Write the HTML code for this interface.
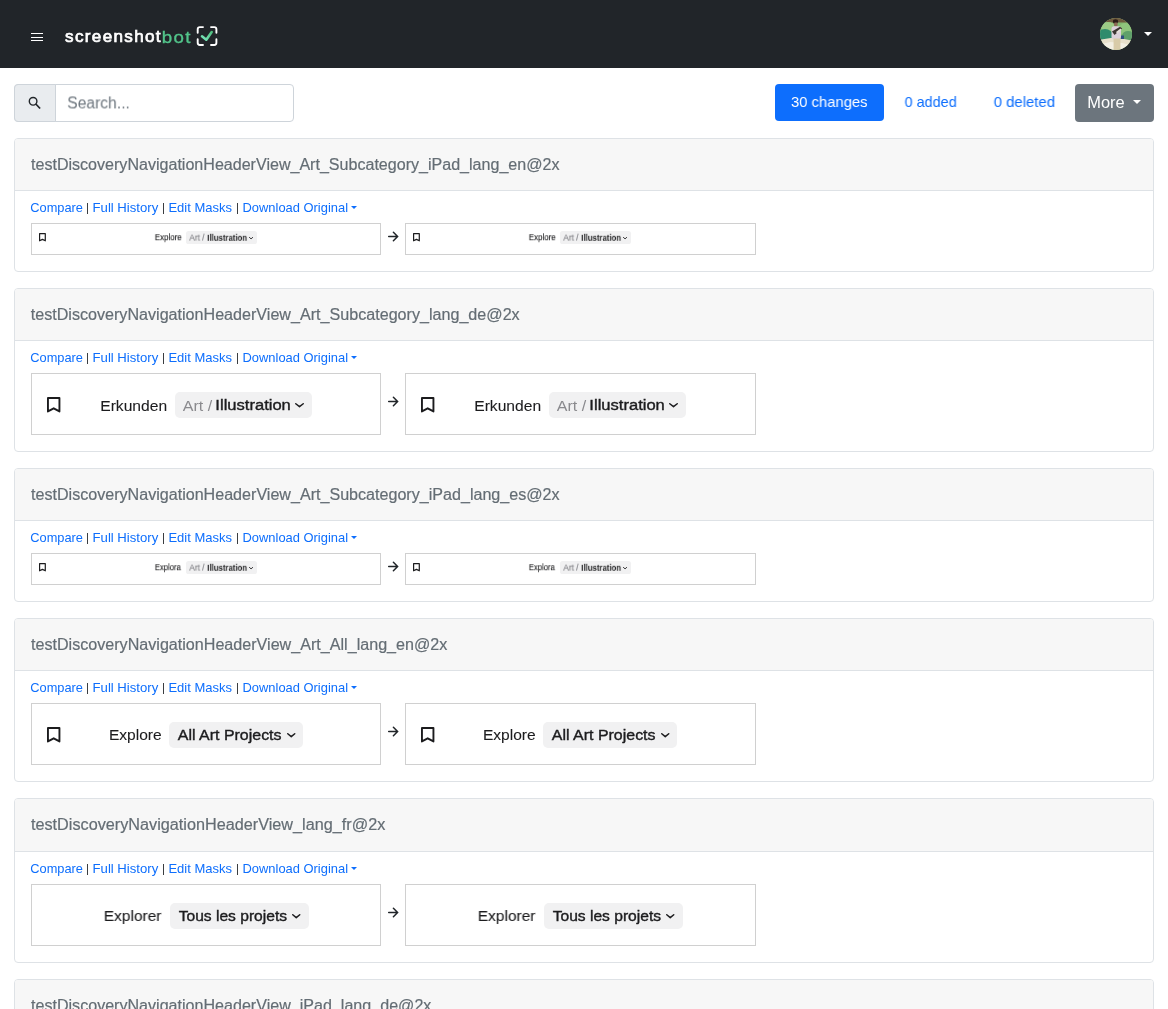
<!DOCTYPE html>
<html><head><meta charset="utf-8"><title>screenshotbot</title>
<style>
html,body{margin:0;padding:0;background:#fff;}
body{width:1168px;height:1009px;overflow:hidden;position:relative;font-family:"Liberation Sans", sans-serif;}
div,span,svg{box-sizing:border-box;}
.a{position:absolute;}
.t{position:absolute;white-space:nowrap;}
.fit{display:inline-block;transform-origin:0 0;will-change:transform;}
.nav{position:absolute;left:0;top:0;width:1168px;height:68px;background:#212529;}
.card{position:absolute;left:14px;width:1140px;border:1px solid #dee2e6;border-radius:4px;overflow:hidden;background:#fff;}
.ch{position:absolute;left:0;top:0;right:0;background:#f7f7f7;border-bottom:1px solid #dee2e6;}
.caret{position:absolute;width:0;height:0;border-style:solid;border-color:#0d6efd transparent transparent transparent;}
.box{position:absolute;border:1px solid #d0d0d0;background:#fff;}
.pill{position:absolute;background:#f1f1f2;}
</style></head><body>
<div class="nav"></div>
<div class="a" style="left:31px;top:33.0px;width:12px;height:1.35px;background:#fff"></div>
<div class="a" style="left:31px;top:36.5px;width:12px;height:1.35px;background:#fff"></div>
<div class="a" style="left:31px;top:39.7px;width:12px;height:1.35px;background:#fff"></div>
<div class="t" style="left:65.40px;top:25.98px;font-size:17px;line-height:21px;color:#fff;font-weight:normal;-webkit-text-stroke:0.7px #fff;letter-spacing:1.3px;"><span class="fit" style="transform:translate(0.10px,0.40px) scaleX(1.0063)">screenshot</span></div>
<div class="t" style="left:162.60px;top:26.08px;font-size:17px;line-height:21px;color:#52c48a;font-weight:normal;-webkit-text-stroke:0.35px #52c48a;letter-spacing:1.2px;"><span class="fit" style="transform:translate(-1.19px,0.60px) scaleX(1.1000)">bot</span></div>
<svg class="a" style="left:192px;top:22px" width="30" height="28" viewBox="192 22 30 28">
<path d="M203 27.1 H199.9 Q197.7 27.1 197.7 29.3 V32.8" fill="none" stroke="#fff" stroke-width="1.9" stroke-linecap="round"/>
<path d="M211 27.1 H214.2 Q216.4 27.1 216.4 29.3 V32.8" fill="none" stroke="#fff" stroke-width="1.9" stroke-linecap="round"/>
<path d="M197.7 39.3 V42.8 Q197.7 45 199.9 45 H203" fill="none" stroke="#fff" stroke-width="1.9" stroke-linecap="round"/>
<path d="M216.4 39.3 V42.8 Q216.4 45 214.2 45 H211" fill="none" stroke="#fff" stroke-width="1.9" stroke-linecap="round"/>
<defs><linearGradient id="g" x1="0" y1="1" x2="1" y2="0"><stop offset="0" stop-color="#7be8bd"/><stop offset="1" stop-color="#4fbf7f"/></linearGradient></defs>
<path d="M202 36.3 L206.3 39.7 L211.7 32" fill="none" stroke="url(#g)" stroke-width="2.6" stroke-linecap="round" stroke-linejoin="round"/>
</svg>
<div class="a" style="left:1100px;top:18px;width:32px;height:32px;border-radius:50%;overflow:hidden;background:#9cc98e;">
<svg class="a" style="left:0;top:0" width="32" height="32" viewBox="0 0 32 32">
<defs><filter id="bl" x="-10%" y="-10%" width="120%" height="120%"><feGaussianBlur stdDeviation="0.55"/></filter></defs>
<g filter="url(#bl)">
<rect x="-2" y="-2" width="36" height="36" fill="#86bb73"/>
<rect x="-2" y="-2" width="36" height="7" fill="#6e5a3e"/>
<rect x="-2" y="4.5" width="36" height="18" fill="#82b96f"/>
<ellipse cx="8" cy="9" rx="7" ry="5" fill="#9ccb86"/>
<ellipse cx="25" cy="11" rx="6" ry="6" fill="#8fc47b"/>
<ellipse cx="5" cy="18" rx="8" ry="7" fill="#2f8b6c"/>
<ellipse cx="28" cy="18" rx="6" ry="5" fill="#5ea06a"/>
<polygon points="-2,22 14,19.5 22,20.5 34,23 34,34 -2,34" fill="#e7e0cb"/>
<polygon points="-2,27 10,24 22,25 34,28 34,34 -2,34" fill="#f3efe3"/>
<rect x="20.5" y="17.5" width="3.5" height="3.5" fill="#2f4f82"/>
<ellipse cx="15.5" cy="3.6" rx="2.6" ry="2.3" fill="#2a1d17"/>
<rect x="14" y="4.5" width="3.6" height="3.8" rx="1.2" fill="#8b6a55"/>
<rect x="11.5" y="8.3" width="9.5" height="13" rx="2.5" fill="#dcd0da"/>
<polygon points="12,13.5 20,8.8 22.2,10.5 14.5,17" fill="#3c3430"/>
<polygon points="16,14 20.5,10.5 21.5,12 17,15.5" fill="#e8e0dc"/>
<rect x="13.6" y="20.5" width="6.8" height="12" fill="#d8cba8"/>
</g></svg>
</div>
<div class="caret" style="left:1144px;top:31.7px;border-width:4.3px 4px 0 4px;border-top-color:#fff"></div>
<div class="a" style="left:14px;top:84px;width:280px;height:38px;border:1px solid #ced4da;border-radius:4px;background:#fff"></div>
<div class="a" style="left:14px;top:84px;width:42px;height:38px;border:1px solid #ced4da;border-radius:4px 0 0 4px;background:#e9ecef"></div>
<svg class="a" style="left:20px;top:90px" width="30" height="26" viewBox="20 90 30 26">
<circle cx="33.1" cy="101.3" r="3.8" fill="none" stroke="#212529" stroke-width="1.4"/>
<path d="M35.8 104.0 L40.1 108.5" stroke="#212529" stroke-width="1.75"/>
</svg>
<div class="t" style="left:68.20px;top:92.11px;font-size:16px;line-height:20px;color:#6c757d;font-weight:normal;"><span class="fit" style="transform:translate(-0.78px,1.40px) scaleX(0.9774)">Search...</span></div>
<div class="a" style="left:775px;top:84px;width:109px;height:37.2px;background:#0d6efd;border-radius:4px"></div>
<div class="t" style="left:792.00px;top:92.04px;font-size:15px;line-height:19px;color:#fff;font-weight:normal;"><span class="fit" style="transform:translate(-0.99px,0.00px) scaleX(0.9868)">30 changes</span></div>
<div class="t" style="left:904.60px;top:92.04px;font-size:15px;line-height:19px;color:#0d6efd;font-weight:normal;"><span class="fit" style="transform:translate(-0.38px,0.00px) scaleX(0.9593)">0 added</span></div>
<div class="t" style="left:993.70px;top:92.04px;font-size:15px;line-height:19px;color:#0d6efd;font-weight:normal;"><span class="fit" style="transform:translate(-0.30px,0.00px) scaleX(0.9934)">0 deleted</span></div>
<div class="a" style="left:1075px;top:84px;width:79px;height:38px;background:#6c757d;border-radius:4px"></div>
<div class="t" style="left:1088.70px;top:92.41px;font-size:16px;line-height:20px;color:#fff;font-weight:normal;"><span class="fit" style="transform:translate(-1.68px,1.00px) scaleX(1.0257)">More</span></div>
<div class="caret" style="left:1133px;top:99.8px;border-width:4.9px 4px 0 4px;border-top-color:#fff"></div>
<div class="card" style="top:138px;height:134px"><div class="ch" style="height:52px"></div></div>
<div class="t" style="left:31.00px;top:153.91px;font-size:16px;line-height:20px;color:#646d74;font-weight:normal;-webkit-text-stroke:0.2px #646d74;"><span class="fit" style="transform:translate(0.00px,1.00px) scaleX(1.0038)">testDiscoveryNavigationHeaderView_Art_Subcategory_iPad_lang_en@2x</span></div>
<div class="t" style="left:31.40px;top:199.73px;font-size:12.8px;line-height:16px;color:#0d6efd;font-weight:normal;"><span class="fit" style="transform:translate(-0.70px,0.00px) scaleX(1.0000)">Compare</span></div>
<div class="t" style="left:93.40px;top:199.13px;font-size:12.8px;line-height:16px;color:#0d6efd;font-weight:normal;"><span class="fit" style="transform:translate(-0.42px,0.80px) scaleX(1.0254)">Full History</span></div>
<div class="t" style="left:169.70px;top:199.13px;font-size:12.8px;line-height:16px;color:#0d6efd;font-weight:normal;"><span class="fit" style="transform:translate(-1.62px,0.80px) scaleX(1.0164)">Edit Masks</span></div>
<div class="t" style="left:243.30px;top:199.13px;font-size:12.8px;line-height:16px;color:#0d6efd;font-weight:normal;"><span class="fit" style="transform:translate(-0.46px,0.80px) scaleX(1.0087)">Download Original</span></div>
<div class="a" style="left:87.1px;top:203px;width:1.3px;height:11px;background:#3a3d40"></div>
<div class="a" style="left:162.9px;top:203px;width:1.3px;height:11px;background:#3a3d40"></div>
<div class="a" style="left:237.1px;top:203px;width:1.3px;height:11px;background:#3a3d40"></div>
<div class="caret" style="left:351px;top:206px;border-width:3.2px 3px 0 3px"></div>
<div class="box" style="left:31px;top:223px;width:350px;height:32px"></div>
<div class="box" style="left:405px;top:223px;width:351px;height:32px"></div>
<svg class="a" style="left:387px;top:230.5px" width="12" height="11" viewBox="0 0 12 11"><path d="M1.7 5.5 H10.6 M6.4 1.3 L10.6 5.5 L6.4 9.7" fill="none" stroke="#212529" stroke-width="1.5" stroke-linecap="round" stroke-linejoin="miter"/></svg>
<svg class="a" style="left:39.1px;top:233.3px;overflow:visible" width="6.9" height="8.4" viewBox="0 0 6.9 8.4"><path d="M0.6 0.6 H6.300000000000001 V7.800000000000001 L3.45 6.4 L0.6 7.800000000000001 Z" fill="none" stroke="#1c1c1e" stroke-width="1.2" stroke-linejoin="round" stroke-linecap="round"/></svg>
<div class="pill" style="left:185.6px;top:231.2px;width:71.4px;height:12.800000000000011px;border-radius:2.6px"></div>
<div class="t" style="left:154.80px;top:231.43px;font-size:9px;line-height:11px;color:#1c1c1e;font-weight:normal;-webkit-text-stroke:0.15px #1c1c1e;"><span class="fit" style="transform:translate(-0.18px,1.20px) scaleX(0.8800)">Explore</span></div>
<div class="t" style="left:189.00px;top:232.13px;font-size:9px;line-height:11px;color:#7c7c80;font-weight:normal;-webkit-text-stroke:0.1px #7c7c80;"><span class="fit" style="transform:translate(0.30px,0.60px) scaleX(0.9176)">Art /</span></div>
<div class="t" style="left:207.20px;top:231.73px;font-size:9px;line-height:11px;color:#1c1c1e;font-weight:bold;"><span class="fit" style="transform:translate(0.27px,0.80px) scaleX(0.8652)">Illustration</span></div>
<svg class="a" style="left:249.3px;top:237.1px;overflow:visible" width="4.099999999999994" height="2.3000000000000114" viewBox="0 0 4.099999999999994 2.3000000000000114"><path d="M0.45 0.45 L2.049999999999997 1.8500000000000114 L3.649999999999994 0.45" fill="none" stroke="#1c1c1e" stroke-width="0.9" stroke-linecap="round" stroke-linejoin="round"/></svg>
<svg class="a" style="left:413.1px;top:233.3px;overflow:visible" width="6.9" height="8.4" viewBox="0 0 6.9 8.4"><path d="M0.6 0.6 H6.300000000000001 V7.800000000000001 L3.45 6.4 L0.6 7.800000000000001 Z" fill="none" stroke="#1c1c1e" stroke-width="1.2" stroke-linejoin="round" stroke-linecap="round"/></svg>
<div class="pill" style="left:559.6px;top:231.2px;width:71.39999999999998px;height:12.800000000000011px;border-radius:2.6px"></div>
<div class="t" style="left:528.80px;top:231.43px;font-size:9px;line-height:11px;color:#1c1c1e;font-weight:normal;-webkit-text-stroke:0.15px #1c1c1e;"><span class="fit" style="transform:translate(-0.18px,1.20px) scaleX(0.8800)">Explore</span></div>
<div class="t" style="left:563.00px;top:232.13px;font-size:9px;line-height:11px;color:#7c7c80;font-weight:normal;-webkit-text-stroke:0.1px #7c7c80;"><span class="fit" style="transform:translate(0.30px,0.60px) scaleX(0.9176)">Art /</span></div>
<div class="t" style="left:581.20px;top:231.73px;font-size:9px;line-height:11px;color:#1c1c1e;font-weight:bold;"><span class="fit" style="transform:translate(0.27px,0.80px) scaleX(0.8652)">Illustration</span></div>
<svg class="a" style="left:623.3px;top:237.1px;overflow:visible" width="4.100000000000023" height="2.3000000000000114" viewBox="0 0 4.100000000000023 2.3000000000000114"><path d="M0.45 0.45 L2.0500000000000114 1.8500000000000114 L3.6500000000000226 0.45" fill="none" stroke="#1c1c1e" stroke-width="0.9" stroke-linecap="round" stroke-linejoin="round"/></svg>
<div class="card" style="top:288px;height:164px"><div class="ch" style="height:52px"></div></div>
<div class="t" style="left:31.00px;top:303.91px;font-size:16px;line-height:20px;color:#646d74;font-weight:normal;-webkit-text-stroke:0.2px #646d74;"><span class="fit" style="transform:translate(-0.30px,1.00px) scaleX(1.0070)">testDiscoveryNavigationHeaderView_Art_Subcategory_lang_de@2x</span></div>
<div class="t" style="left:31.40px;top:349.73px;font-size:12.8px;line-height:16px;color:#0d6efd;font-weight:normal;"><span class="fit" style="transform:translate(-0.70px,0.00px) scaleX(1.0000)">Compare</span></div>
<div class="t" style="left:93.40px;top:349.13px;font-size:12.8px;line-height:16px;color:#0d6efd;font-weight:normal;"><span class="fit" style="transform:translate(-0.42px,0.80px) scaleX(1.0254)">Full History</span></div>
<div class="t" style="left:169.70px;top:349.13px;font-size:12.8px;line-height:16px;color:#0d6efd;font-weight:normal;"><span class="fit" style="transform:translate(-1.62px,0.80px) scaleX(1.0164)">Edit Masks</span></div>
<div class="t" style="left:243.30px;top:349.13px;font-size:12.8px;line-height:16px;color:#0d6efd;font-weight:normal;"><span class="fit" style="transform:translate(-0.46px,0.80px) scaleX(1.0087)">Download Original</span></div>
<div class="a" style="left:87.1px;top:353px;width:1.3px;height:11px;background:#3a3d40"></div>
<div class="a" style="left:162.9px;top:353px;width:1.3px;height:11px;background:#3a3d40"></div>
<div class="a" style="left:237.1px;top:353px;width:1.3px;height:11px;background:#3a3d40"></div>
<div class="caret" style="left:351px;top:356px;border-width:3.2px 3px 0 3px"></div>
<div class="box" style="left:31px;top:373px;width:350px;height:62px"></div>
<div class="box" style="left:405px;top:373px;width:351px;height:62px"></div>
<svg class="a" style="left:387px;top:395.5px" width="12" height="11" viewBox="0 0 12 11"><path d="M1.7 5.5 H10.6 M6.4 1.3 L10.6 5.5 L6.4 9.7" fill="none" stroke="#212529" stroke-width="1.5" stroke-linecap="round" stroke-linejoin="miter"/></svg>
<svg class="a" style="left:46.5px;top:397px;overflow:visible" width="13.4" height="15.4" viewBox="0 0 13.4 15.4"><path d="M0.95 0.95 H12.450000000000001 V14.450000000000001 L6.7 11.3 L0.95 14.450000000000001 Z" fill="none" stroke="#1c1c1e" stroke-width="1.9" stroke-linejoin="round" stroke-linecap="round"/></svg>
<div class="pill" style="left:175.1px;top:391.8px;width:136.6px;height:26.30000000000001px;border-radius:5px"></div>
<div class="t" style="left:101.00px;top:395.58px;font-size:15.5px;line-height:19px;color:#1c1c1e;font-weight:normal;-webkit-text-stroke:0.1px #1c1c1e;"><span class="fit" style="transform:translate(-0.76px,-0.30px) scaleX(1.0077)">Erkunden</span></div>
<div class="t" style="left:182.90px;top:395.58px;font-size:15.5px;line-height:19px;color:#8a8a8e;font-weight:normal;"><span class="fit" style="transform:translate(-0.20px,-0.30px) scaleX(1.0357)">Art /</span></div>
<div class="t" style="left:216.80px;top:395.18px;font-size:15.5px;line-height:19px;color:#1c1c1e;font-weight:normal;-webkit-text-stroke:0.4px #1c1c1e;"><span class="fit" style="transform:translate(-1.63px,-0.10px) scaleX(1.0681)">Illustration</span></div>
<svg class="a" style="left:295.2px;top:402.8px;overflow:visible" width="9.0" height="4.399999999999977" viewBox="0 0 9.0 4.399999999999977"><path d="M0.75 0.75 L4.5 3.6499999999999773 L8.25 0.75" fill="none" stroke="#1c1c1e" stroke-width="1.5" stroke-linecap="round" stroke-linejoin="round"/></svg>
<svg class="a" style="left:420.5px;top:397px;overflow:visible" width="13.4" height="15.4" viewBox="0 0 13.4 15.4"><path d="M0.95 0.95 H12.450000000000001 V14.450000000000001 L6.7 11.3 L0.95 14.450000000000001 Z" fill="none" stroke="#1c1c1e" stroke-width="1.9" stroke-linejoin="round" stroke-linecap="round"/></svg>
<div class="pill" style="left:549.1px;top:391.8px;width:136.60000000000002px;height:26.30000000000001px;border-radius:5px"></div>
<div class="t" style="left:475.00px;top:395.58px;font-size:15.5px;line-height:19px;color:#1c1c1e;font-weight:normal;-webkit-text-stroke:0.1px #1c1c1e;"><span class="fit" style="transform:translate(-0.76px,-0.30px) scaleX(1.0077)">Erkunden</span></div>
<div class="t" style="left:556.90px;top:395.58px;font-size:15.5px;line-height:19px;color:#8a8a8e;font-weight:normal;"><span class="fit" style="transform:translate(-0.20px,-0.30px) scaleX(1.0357)">Art /</span></div>
<div class="t" style="left:590.80px;top:395.18px;font-size:15.5px;line-height:19px;color:#1c1c1e;font-weight:normal;-webkit-text-stroke:0.4px #1c1c1e;"><span class="fit" style="transform:translate(-1.63px,-0.10px) scaleX(1.0681)">Illustration</span></div>
<svg class="a" style="left:669.2px;top:402.8px;overflow:visible" width="9.0" height="4.399999999999977" viewBox="0 0 9.0 4.399999999999977"><path d="M0.75 0.75 L4.5 3.6499999999999773 L8.25 0.75" fill="none" stroke="#1c1c1e" stroke-width="1.5" stroke-linecap="round" stroke-linejoin="round"/></svg>
<div class="card" style="top:468px;height:134px"><div class="ch" style="height:52px"></div></div>
<div class="t" style="left:31.00px;top:483.91px;font-size:16px;line-height:20px;color:#646d74;font-weight:normal;-webkit-text-stroke:0.2px #646d74;"><span class="fit" style="transform:translate(0.00px,1.00px) scaleX(1.0057)">testDiscoveryNavigationHeaderView_Art_Subcategory_iPad_lang_es@2x</span></div>
<div class="t" style="left:31.40px;top:529.73px;font-size:12.8px;line-height:16px;color:#0d6efd;font-weight:normal;"><span class="fit" style="transform:translate(-0.70px,0.00px) scaleX(1.0000)">Compare</span></div>
<div class="t" style="left:93.40px;top:529.13px;font-size:12.8px;line-height:16px;color:#0d6efd;font-weight:normal;"><span class="fit" style="transform:translate(-0.42px,0.80px) scaleX(1.0254)">Full History</span></div>
<div class="t" style="left:169.70px;top:529.13px;font-size:12.8px;line-height:16px;color:#0d6efd;font-weight:normal;"><span class="fit" style="transform:translate(-1.62px,0.80px) scaleX(1.0164)">Edit Masks</span></div>
<div class="t" style="left:243.30px;top:529.13px;font-size:12.8px;line-height:16px;color:#0d6efd;font-weight:normal;"><span class="fit" style="transform:translate(-0.46px,0.80px) scaleX(1.0087)">Download Original</span></div>
<div class="a" style="left:87.1px;top:533px;width:1.3px;height:11px;background:#3a3d40"></div>
<div class="a" style="left:162.9px;top:533px;width:1.3px;height:11px;background:#3a3d40"></div>
<div class="a" style="left:237.1px;top:533px;width:1.3px;height:11px;background:#3a3d40"></div>
<div class="caret" style="left:351px;top:536px;border-width:3.2px 3px 0 3px"></div>
<div class="box" style="left:31px;top:553px;width:350px;height:32px"></div>
<div class="box" style="left:405px;top:553px;width:351px;height:32px"></div>
<svg class="a" style="left:387px;top:560.5px" width="12" height="11" viewBox="0 0 12 11"><path d="M1.7 5.5 H10.6 M6.4 1.3 L10.6 5.5 L6.4 9.7" fill="none" stroke="#212529" stroke-width="1.5" stroke-linecap="round" stroke-linejoin="miter"/></svg>
<svg class="a" style="left:39.1px;top:563.3px;overflow:visible" width="6.9" height="8.4" viewBox="0 0 6.9 8.4"><path d="M0.6 0.6 H6.300000000000001 V7.800000000000001 L3.45 6.4 L0.6 7.800000000000001 Z" fill="none" stroke="#1c1c1e" stroke-width="1.2" stroke-linejoin="round" stroke-linecap="round"/></svg>
<div class="pill" style="left:185.6px;top:561.2px;width:71.4px;height:12.799999999999955px;border-radius:2.6px"></div>
<div class="t" style="left:154.80px;top:561.43px;font-size:9px;line-height:11px;color:#1c1c1e;font-weight:normal;-webkit-text-stroke:0.15px #1c1c1e;"><span class="fit" style="transform:translate(-0.17px,1.20px) scaleX(0.8516)">Explora</span></div>
<div class="t" style="left:189.00px;top:562.13px;font-size:9px;line-height:11px;color:#7c7c80;font-weight:normal;-webkit-text-stroke:0.1px #7c7c80;"><span class="fit" style="transform:translate(0.30px,0.60px) scaleX(0.9176)">Art /</span></div>
<div class="t" style="left:207.20px;top:561.73px;font-size:9px;line-height:11px;color:#1c1c1e;font-weight:bold;"><span class="fit" style="transform:translate(0.27px,0.80px) scaleX(0.8652)">Illustration</span></div>
<svg class="a" style="left:249.3px;top:567.1px;overflow:visible" width="4.099999999999994" height="2.2999999999999545" viewBox="0 0 4.099999999999994 2.2999999999999545"><path d="M0.45 0.45 L2.049999999999997 1.8499999999999546 L3.649999999999994 0.45" fill="none" stroke="#1c1c1e" stroke-width="0.9" stroke-linecap="round" stroke-linejoin="round"/></svg>
<svg class="a" style="left:413.1px;top:563.3px;overflow:visible" width="6.9" height="8.4" viewBox="0 0 6.9 8.4"><path d="M0.6 0.6 H6.300000000000001 V7.800000000000001 L3.45 6.4 L0.6 7.800000000000001 Z" fill="none" stroke="#1c1c1e" stroke-width="1.2" stroke-linejoin="round" stroke-linecap="round"/></svg>
<div class="pill" style="left:559.6px;top:561.2px;width:71.39999999999998px;height:12.799999999999955px;border-radius:2.6px"></div>
<div class="t" style="left:528.80px;top:561.43px;font-size:9px;line-height:11px;color:#1c1c1e;font-weight:normal;-webkit-text-stroke:0.15px #1c1c1e;"><span class="fit" style="transform:translate(-0.17px,1.20px) scaleX(0.8516)">Explora</span></div>
<div class="t" style="left:563.00px;top:562.13px;font-size:9px;line-height:11px;color:#7c7c80;font-weight:normal;-webkit-text-stroke:0.1px #7c7c80;"><span class="fit" style="transform:translate(0.30px,0.60px) scaleX(0.9176)">Art /</span></div>
<div class="t" style="left:581.20px;top:561.73px;font-size:9px;line-height:11px;color:#1c1c1e;font-weight:bold;"><span class="fit" style="transform:translate(0.27px,0.80px) scaleX(0.8652)">Illustration</span></div>
<svg class="a" style="left:623.3px;top:567.1px;overflow:visible" width="4.100000000000023" height="2.2999999999999545" viewBox="0 0 4.100000000000023 2.2999999999999545"><path d="M0.45 0.45 L2.0500000000000114 1.8499999999999546 L3.6500000000000226 0.45" fill="none" stroke="#1c1c1e" stroke-width="0.9" stroke-linecap="round" stroke-linejoin="round"/></svg>
<div class="card" style="top:618px;height:164px"><div class="ch" style="height:52px"></div></div>
<div class="t" style="left:31.00px;top:633.91px;font-size:16px;line-height:20px;color:#646d74;font-weight:normal;-webkit-text-stroke:0.2px #646d74;"><span class="fit" style="transform:translate(-0.05px,1.00px) scaleX(1.0070)">testDiscoveryNavigationHeaderView_Art_All_lang_en@2x</span></div>
<div class="t" style="left:31.40px;top:679.73px;font-size:12.8px;line-height:16px;color:#0d6efd;font-weight:normal;"><span class="fit" style="transform:translate(-0.70px,0.00px) scaleX(1.0000)">Compare</span></div>
<div class="t" style="left:93.40px;top:679.13px;font-size:12.8px;line-height:16px;color:#0d6efd;font-weight:normal;"><span class="fit" style="transform:translate(-0.42px,0.80px) scaleX(1.0254)">Full History</span></div>
<div class="t" style="left:169.70px;top:679.13px;font-size:12.8px;line-height:16px;color:#0d6efd;font-weight:normal;"><span class="fit" style="transform:translate(-1.62px,0.80px) scaleX(1.0164)">Edit Masks</span></div>
<div class="t" style="left:243.30px;top:679.13px;font-size:12.8px;line-height:16px;color:#0d6efd;font-weight:normal;"><span class="fit" style="transform:translate(-0.46px,0.80px) scaleX(1.0087)">Download Original</span></div>
<div class="a" style="left:87.1px;top:683px;width:1.3px;height:11px;background:#3a3d40"></div>
<div class="a" style="left:162.9px;top:683px;width:1.3px;height:11px;background:#3a3d40"></div>
<div class="a" style="left:237.1px;top:683px;width:1.3px;height:11px;background:#3a3d40"></div>
<div class="caret" style="left:351px;top:686px;border-width:3.2px 3px 0 3px"></div>
<div class="box" style="left:31px;top:703px;width:350px;height:62px"></div>
<div class="box" style="left:405px;top:703px;width:351px;height:62px"></div>
<svg class="a" style="left:387px;top:725.5px" width="12" height="11" viewBox="0 0 12 11"><path d="M1.7 5.5 H10.6 M6.4 1.3 L10.6 5.5 L6.4 9.7" fill="none" stroke="#212529" stroke-width="1.5" stroke-linecap="round" stroke-linejoin="miter"/></svg>
<svg class="a" style="left:46.5px;top:727px;overflow:visible" width="13.4" height="15.4" viewBox="0 0 13.4 15.4"><path d="M0.95 0.95 H12.450000000000001 V14.450000000000001 L6.7 11.3 L0.95 14.450000000000001 Z" fill="none" stroke="#1c1c1e" stroke-width="1.9" stroke-linejoin="round" stroke-linecap="round"/></svg>
<div class="pill" style="left:169.3px;top:721.8px;width:133.89999999999998px;height:26.300000000000068px;border-radius:5px"></div>
<div class="t" style="left:109.90px;top:725.23px;font-size:15.5px;line-height:19px;color:#1c1c1e;font-weight:normal;-webkit-text-stroke:0.1px #1c1c1e;"><span class="fit" style="transform:translate(-1.10px,0.00px) scaleX(1.0039)">Explore</span></div>
<div class="t" style="left:177.70px;top:725.18px;font-size:15.5px;line-height:19px;color:#1c1c1e;font-weight:normal;-webkit-text-stroke:0.4px #1c1c1e;"><span class="fit" style="transform:translate(-0.16px,-0.10px) scaleX(1.0287)">All Art Projects</span></div>
<svg class="a" style="left:287px;top:732.8px;overflow:visible" width="8.5" height="4.400000000000091" viewBox="0 0 8.5 4.400000000000091"><path d="M0.75 0.75 L4.25 3.650000000000091 L7.75 0.75" fill="none" stroke="#1c1c1e" stroke-width="1.5" stroke-linecap="round" stroke-linejoin="round"/></svg>
<svg class="a" style="left:420.5px;top:727px;overflow:visible" width="13.4" height="15.4" viewBox="0 0 13.4 15.4"><path d="M0.95 0.95 H12.450000000000001 V14.450000000000001 L6.7 11.3 L0.95 14.450000000000001 Z" fill="none" stroke="#1c1c1e" stroke-width="1.9" stroke-linejoin="round" stroke-linecap="round"/></svg>
<div class="pill" style="left:543.3px;top:721.8px;width:133.9000000000001px;height:26.300000000000068px;border-radius:5px"></div>
<div class="t" style="left:483.90px;top:725.23px;font-size:15.5px;line-height:19px;color:#1c1c1e;font-weight:normal;-webkit-text-stroke:0.1px #1c1c1e;"><span class="fit" style="transform:translate(-1.10px,0.00px) scaleX(1.0039)">Explore</span></div>
<div class="t" style="left:551.70px;top:725.18px;font-size:15.5px;line-height:19px;color:#1c1c1e;font-weight:normal;-webkit-text-stroke:0.4px #1c1c1e;"><span class="fit" style="transform:translate(-0.16px,-0.10px) scaleX(1.0287)">All Art Projects</span></div>
<svg class="a" style="left:661px;top:732.8px;overflow:visible" width="8.5" height="4.400000000000091" viewBox="0 0 8.5 4.400000000000091"><path d="M0.75 0.75 L4.25 3.650000000000091 L7.75 0.75" fill="none" stroke="#1c1c1e" stroke-width="1.5" stroke-linecap="round" stroke-linejoin="round"/></svg>
<div class="card" style="top:798px;height:165px"><div class="ch" style="height:53px"></div></div>
<div class="t" style="left:31.00px;top:813.91px;font-size:16px;line-height:20px;color:#646d74;font-weight:normal;-webkit-text-stroke:0.2px #646d74;"><span class="fit" style="transform:translate(-0.05px,1.00px) scaleX(1.0140)">testDiscoveryNavigationHeaderView_lang_fr@2x</span></div>
<div class="t" style="left:31.40px;top:860.73px;font-size:12.8px;line-height:16px;color:#0d6efd;font-weight:normal;"><span class="fit" style="transform:translate(-0.70px,0.00px) scaleX(1.0000)">Compare</span></div>
<div class="t" style="left:93.40px;top:860.13px;font-size:12.8px;line-height:16px;color:#0d6efd;font-weight:normal;"><span class="fit" style="transform:translate(-0.42px,0.80px) scaleX(1.0254)">Full History</span></div>
<div class="t" style="left:169.70px;top:860.13px;font-size:12.8px;line-height:16px;color:#0d6efd;font-weight:normal;"><span class="fit" style="transform:translate(-1.62px,0.80px) scaleX(1.0164)">Edit Masks</span></div>
<div class="t" style="left:243.30px;top:860.13px;font-size:12.8px;line-height:16px;color:#0d6efd;font-weight:normal;"><span class="fit" style="transform:translate(-0.46px,0.80px) scaleX(1.0087)">Download Original</span></div>
<div class="a" style="left:87.1px;top:864px;width:1.3px;height:11px;background:#3a3d40"></div>
<div class="a" style="left:162.9px;top:864px;width:1.3px;height:11px;background:#3a3d40"></div>
<div class="a" style="left:237.1px;top:864px;width:1.3px;height:11px;background:#3a3d40"></div>
<div class="caret" style="left:351px;top:867px;border-width:3.2px 3px 0 3px"></div>
<div class="box" style="left:31px;top:884px;width:350px;height:62px"></div>
<div class="box" style="left:405px;top:884px;width:351px;height:62px"></div>
<svg class="a" style="left:387px;top:906.5px" width="12" height="11" viewBox="0 0 12 11"><path d="M1.7 5.5 H10.6 M6.4 1.3 L10.6 5.5 L6.4 9.7" fill="none" stroke="#212529" stroke-width="1.5" stroke-linecap="round" stroke-linejoin="miter"/></svg>
<div class="pill" style="left:170px;top:902.8px;width:138.8px;height:26.300000000000068px;border-radius:5px"></div>
<div class="t" style="left:104.40px;top:906.23px;font-size:15.5px;line-height:19px;color:#1c1c1e;font-weight:normal;-webkit-text-stroke:0.1px #1c1c1e;"><span class="fit" style="transform:translate(-0.25px,0.00px) scaleX(0.9982)">Explorer</span></div>
<div class="t" style="left:178.40px;top:906.18px;font-size:15.5px;line-height:19px;color:#1c1c1e;font-weight:normal;-webkit-text-stroke:0.4px #1c1c1e;"><span class="fit" style="transform:translate(0.65px,-0.10px) scaleX(1.0065)">Tous les projets</span></div>
<svg class="a" style="left:292.4px;top:913.8px;overflow:visible" width="8.5" height="4.400000000000091" viewBox="0 0 8.5 4.400000000000091"><path d="M0.75 0.75 L4.25 3.650000000000091 L7.75 0.75" fill="none" stroke="#1c1c1e" stroke-width="1.5" stroke-linecap="round" stroke-linejoin="round"/></svg>
<div class="pill" style="left:544px;top:902.8px;width:138.79999999999995px;height:26.300000000000068px;border-radius:5px"></div>
<div class="t" style="left:478.40px;top:906.23px;font-size:15.5px;line-height:19px;color:#1c1c1e;font-weight:normal;-webkit-text-stroke:0.1px #1c1c1e;"><span class="fit" style="transform:translate(-0.25px,0.00px) scaleX(0.9982)">Explorer</span></div>
<div class="t" style="left:552.40px;top:906.18px;font-size:15.5px;line-height:19px;color:#1c1c1e;font-weight:normal;-webkit-text-stroke:0.4px #1c1c1e;"><span class="fit" style="transform:translate(0.65px,-0.10px) scaleX(1.0065)">Tous les projets</span></div>
<svg class="a" style="left:666.4px;top:913.8px;overflow:visible" width="8.5" height="4.400000000000091" viewBox="0 0 8.5 4.400000000000091"><path d="M0.75 0.75 L4.25 3.650000000000091 L7.75 0.75" fill="none" stroke="#1c1c1e" stroke-width="1.5" stroke-linecap="round" stroke-linejoin="round"/></svg>
<div class="card" style="top:979px;height:134px"><div class="ch" style="height:52px"></div></div>
<div class="t" style="left:31.00px;top:994.91px;font-size:16px;line-height:20px;color:#646d74;font-weight:normal;-webkit-text-stroke:0.2px #646d74;"><span class="fit" style="transform:translate(0.00px,1.00px) scaleX(1.0050)">testDiscoveryNavigationHeaderView_iPad_lang_de@2x</span></div>
<div class="t" style="left:31.40px;top:1040.73px;font-size:12.8px;line-height:16px;color:#0d6efd;font-weight:normal;"><span class="fit" style="transform:translate(-0.70px,0.00px) scaleX(1.0000)">Compare</span></div>
<div class="t" style="left:93.40px;top:1040.13px;font-size:12.8px;line-height:16px;color:#0d6efd;font-weight:normal;"><span class="fit" style="transform:translate(-0.42px,0.80px) scaleX(1.0254)">Full History</span></div>
<div class="t" style="left:169.70px;top:1040.13px;font-size:12.8px;line-height:16px;color:#0d6efd;font-weight:normal;"><span class="fit" style="transform:translate(-1.62px,0.80px) scaleX(1.0164)">Edit Masks</span></div>
<div class="t" style="left:243.30px;top:1040.13px;font-size:12.8px;line-height:16px;color:#0d6efd;font-weight:normal;"><span class="fit" style="transform:translate(-0.46px,0.80px) scaleX(1.0087)">Download Original</span></div>
<div class="a" style="left:87.1px;top:1044px;width:1.3px;height:11px;background:#3a3d40"></div>
<div class="a" style="left:162.9px;top:1044px;width:1.3px;height:11px;background:#3a3d40"></div>
<div class="a" style="left:237.1px;top:1044px;width:1.3px;height:11px;background:#3a3d40"></div>
<div class="caret" style="left:351px;top:1047px;border-width:3.2px 3px 0 3px"></div>
<div class="box" style="left:31px;top:1064px;width:350px;height:32px"></div>
<div class="box" style="left:405px;top:1064px;width:351px;height:32px"></div>
<svg class="a" style="left:387px;top:1071.5px" width="12" height="11" viewBox="0 0 12 11"><path d="M1.7 5.5 H10.6 M6.4 1.3 L10.6 5.5 L6.4 9.7" fill="none" stroke="#212529" stroke-width="1.5" stroke-linecap="round" stroke-linejoin="miter"/></svg>
<svg class="a" style="left:39.1px;top:1074.3px;overflow:visible" width="6.9" height="8.4" viewBox="0 0 6.9 8.4"><path d="M0.6 0.6 H6.300000000000001 V7.800000000000001 L3.45 6.4 L0.6 7.800000000000001 Z" fill="none" stroke="#1c1c1e" stroke-width="1.2" stroke-linejoin="round" stroke-linecap="round"/></svg>
<div class="pill" style="left:185.6px;top:1072.2px;width:71.4px;height:12.799999999999955px;border-radius:2.6px"></div>
<div class="t" style="left:154.80px;top:1072.43px;font-size:9px;line-height:11px;color:#1c1c1e;font-weight:normal;-webkit-text-stroke:0.15px #1c1c1e;"><span class="fit" style="transform:translate(-0.18px,1.20px) scaleX(0.8800)">Explore</span></div>
<div class="t" style="left:189.00px;top:1073.13px;font-size:9px;line-height:11px;color:#7c7c80;font-weight:normal;-webkit-text-stroke:0.1px #7c7c80;"><span class="fit" style="transform:translate(0.30px,0.60px) scaleX(0.9176)">Art /</span></div>
<div class="t" style="left:207.20px;top:1072.73px;font-size:9px;line-height:11px;color:#1c1c1e;font-weight:bold;"><span class="fit" style="transform:translate(0.27px,0.80px) scaleX(0.8652)">Illustration</span></div>
<svg class="a" style="left:249.3px;top:1078.1px;overflow:visible" width="4.099999999999994" height="2.300000000000182" viewBox="0 0 4.099999999999994 2.300000000000182"><path d="M0.45 0.45 L2.049999999999997 1.850000000000182 L3.649999999999994 0.45" fill="none" stroke="#1c1c1e" stroke-width="0.9" stroke-linecap="round" stroke-linejoin="round"/></svg>
<svg class="a" style="left:413.1px;top:1074.3px;overflow:visible" width="6.9" height="8.4" viewBox="0 0 6.9 8.4"><path d="M0.6 0.6 H6.300000000000001 V7.800000000000001 L3.45 6.4 L0.6 7.800000000000001 Z" fill="none" stroke="#1c1c1e" stroke-width="1.2" stroke-linejoin="round" stroke-linecap="round"/></svg>
<div class="pill" style="left:559.6px;top:1072.2px;width:71.39999999999998px;height:12.799999999999955px;border-radius:2.6px"></div>
<div class="t" style="left:528.80px;top:1072.43px;font-size:9px;line-height:11px;color:#1c1c1e;font-weight:normal;-webkit-text-stroke:0.15px #1c1c1e;"><span class="fit" style="transform:translate(-0.18px,1.20px) scaleX(0.8800)">Explore</span></div>
<div class="t" style="left:563.00px;top:1073.13px;font-size:9px;line-height:11px;color:#7c7c80;font-weight:normal;-webkit-text-stroke:0.1px #7c7c80;"><span class="fit" style="transform:translate(0.30px,0.60px) scaleX(0.9176)">Art /</span></div>
<div class="t" style="left:581.20px;top:1072.73px;font-size:9px;line-height:11px;color:#1c1c1e;font-weight:bold;"><span class="fit" style="transform:translate(0.27px,0.80px) scaleX(0.8652)">Illustration</span></div>
<svg class="a" style="left:623.3px;top:1078.1px;overflow:visible" width="4.100000000000023" height="2.300000000000182" viewBox="0 0 4.100000000000023 2.300000000000182"><path d="M0.45 0.45 L2.0500000000000114 1.850000000000182 L3.6500000000000226 0.45" fill="none" stroke="#1c1c1e" stroke-width="0.9" stroke-linecap="round" stroke-linejoin="round"/></svg>
</body></html>
